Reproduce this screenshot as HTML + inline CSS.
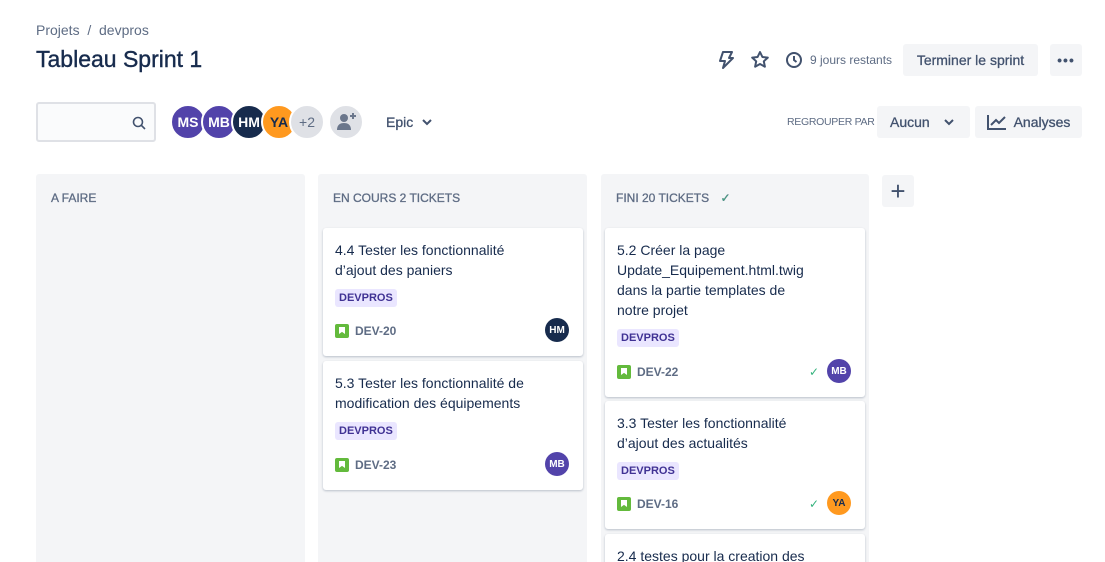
<!DOCTYPE html><html><head><meta charset="utf-8"><style>
*{box-sizing:border-box;margin:0;padding:0}
html,body{width:1105px;height:562px;overflow:hidden}
body{background:#fff;font-family:"Liberation Sans",sans-serif;color:#172b4d;position:relative}
.a{position:absolute}
.crumb{left:36px;top:22px;font-size:14px;color:#5e6c84}
h1{position:absolute;left:36px;top:46px;font-size:23px;font-weight:normal;color:#172b4d;-webkit-text-stroke:0.4px #172b4d}
.btn{position:absolute;background:#f4f5f7;border-radius:3px;font-size:14px;color:#42526e;display:flex;align-items:center;justify-content:center}
.search{left:36px;top:102px;width:120px;height:40px;border:2px solid #dfe1e6;background:#fafbfc;border-radius:3px}
.av{position:absolute;width:32px;height:32px;border-radius:50%;color:#fff;font-size:14px;font-weight:bold;display:flex;align-items:center;justify-content:center;border:2px solid #fff}
.col{position:absolute;top:174px;width:269px;height:388px;background:#f4f5f7;border-radius:3px 3px 0 0;overflow:hidden}
.ch{position:absolute;left:15px;top:17px;font-size:12px;color:#5e6c84;-webkit-text-stroke:0.3px #5e6c84}
.card{position:absolute;left:5px;width:260px;background:#fff;border-radius:3px;box-shadow:0 1px 2px rgba(9,30,66,.25);padding:12px}
.t{font-size:14px;line-height:20px;color:#172b4d;width:200px}
.tag{display:inline-block;background:#eae6ff;color:#403294;font-size:11px;font-weight:bold;padding:3px 4px;border-radius:3px;margin-top:9px}
.ft{position:absolute;left:12px;bottom:18px;display:flex;align-items:center;font-size:12px;font-weight:bold;color:#5e6c84}
.ic{width:14px;height:14px;background:#63ba3c;border-radius:2px;margin-right:6px;position:relative}
.ic:after{content:"";position:absolute;left:4px;top:3px;width:6px;height:7px;background:#fff;clip-path:polygon(0 0,100% 0,100% 100%,50% 70%,0 100%)}
.sa{position:absolute;right:14px;bottom:14px;width:24px;height:24px;border-radius:50%;color:#fff;font-size:10px;font-weight:bold;display:flex;align-items:center;justify-content:center}
.ck{position:absolute;right:46px;bottom:18px;color:#36b37e;font-size:12px}
</style></head><body>
<div class="a crumb">Projets &nbsp;/&nbsp; devpros</div>
<h1>Tableau Sprint 1</h1>
<svg class="a" style="left:717px;top:50px" width="18" height="20" viewBox="0 0 18 20" fill="none" stroke="#42526e" stroke-width="2" stroke-linejoin="round"><path d="M6 2h9l-3 6h4L6 18l2-7H3z"/></svg>
<svg class="a" style="left:750px;top:50px" width="20" height="20" viewBox="0 0 20 20" fill="none" stroke="#42526e" stroke-width="2" stroke-linejoin="round"><path d="M10 2l2.4 5 5.4.6-4 3.7 1.1 5.4L10 14l-4.9 2.7 1.1-5.4-4-3.7 5.4-.6z"/></svg>
<svg class="a" style="left:785px;top:51px" width="18" height="18" viewBox="0 0 18 18" fill="none" stroke="#42526e" stroke-width="2"><circle cx="9" cy="9" r="7"/><path d="M9 5v4l2.5 2"/></svg>
<div class="a" style="left:810px;top:53px;font-size:12px;color:#5e6c84">9 jours restants</div>
<div class="btn" style="left:903px;top:44px;width:135px;height:32px;-webkit-text-stroke:0.3px #42526e">Terminer le sprint</div>
<div class="btn" style="left:1050px;top:44px;width:32px;height:32px;font-weight:bold;font-size:14px;letter-spacing:1px">•••</div>
<div class="a search"><svg class="a" style="left:94px;top:12px" width="14" height="14" viewBox="0 0 14 14" fill="none" stroke="#42526e" stroke-width="1.6"><circle cx="6" cy="6" r="4.5"/><path d="M9.5 9.5L13 13"/></svg></div>
<div class="av" style="left:170px;top:104px;width:36px;height:36px;background:#5243aa">MS</div>
<div class="av" style="left:201px;top:104px;width:36px;height:36px;background:#5243aa">MB</div>
<div class="av" style="left:231px;top:104px;width:36px;height:36px;background:#172b4d">HM</div>
<div class="av" style="left:261px;top:104px;width:36px;height:36px;background:#ff991f;color:#172b4d">YA</div>
<div class="av" style="left:289px;top:104px;width:36px;height:36px;background:#dfe1e6;color:#5e6c84;font-weight:normal">+2</div>
<div class="av" style="left:328px;top:104px;width:36px;height:36px;background:#dfe1e6"><svg width="20" height="20" viewBox="0 0 20 20" fill="#6b778c"><circle cx="8" cy="6" r="4"/><path d="M1 18c0-5 3-7 7-7s7 2 7 7z"/><path d="M14 4h6M17 1v6" stroke="#6b778c" stroke-width="2"/></svg></div>
<div class="a" style="left:386px;top:114px;font-size:14px;color:#42526e;-webkit-text-stroke:0.3px #42526e">Epic</div>
<svg class="a" style="left:422px;top:118px" width="10" height="8" viewBox="0 0 10 8" fill="none" stroke="#42526e" stroke-width="2"><path d="M1 2l4 4 4-4"/></svg>
<div class="a" style="left:787px;top:116px;font-size:10.5px;letter-spacing:-0.3px;color:#5e6c84">REGROUPER PAR</div>
<div class="btn" style="left:877px;top:106px;width:93px;height:32px;justify-content:flex-start;padding-left:13px;-webkit-text-stroke:0.3px #42526e">Aucun<svg style="margin-left:14px" width="10" height="8" viewBox="0 0 10 8" fill="none" stroke="#42526e" stroke-width="2"><path d="M1 2l4 4 4-4"/></svg></div>
<div class="btn" style="left:975px;top:106px;width:107px;height:32px;-webkit-text-stroke:0.3px #42526e"><svg style="margin-right:7px" width="20" height="16" viewBox="0 0 20 16" fill="none" stroke="#42526e" stroke-width="2"><path d="M1 1v14h18M4 11l5-5 3 3 6-6"/></svg>Analyses</div>

<div class="col" style="left:36px"><div class="ch">A FAIRE</div></div>
<div class="col" style="left:318px"><div class="ch">EN COURS 2 TICKETS</div>
 <div class="card" style="top:54px;height:128px"><div class="t">4.4 Tester les fonctionnalité d’ajout des paniers</div><span class="tag">DEVPROS</span><div class="ft"><span class="ic"></span>DEV-20</div><div class="sa" style="background:#172b4d">HM</div></div>
 <div class="card" style="top:187px;height:129px"><div class="t" style="width:220px">5.3 Tester les fonctionnalité de modification des équipements</div><span class="tag">DEVPROS</span><div class="ft"><span class="ic"></span>DEV-23</div><div class="sa" style="background:#5243aa">MB</div></div>
</div>
<div class="col" style="left:601px;width:268px"><div class="ch">FINI 20 TICKETS <span style="color:#36b37e;margin-left:8px">✓</span></div>
 <div class="card" style="top:54px;left:4px;height:169px"><div class="t">5.2 Créer la page Update_Equipement.html.twig dans la partie templates de notre projet</div><span class="tag">DEVPROS</span><div class="ft"><span class="ic"></span>DEV-22</div><span class="ck">✓</span><div class="sa" style="background:#5243aa">MB</div></div>
 <div class="card" style="top:227px;left:4px;height:128px"><div class="t">3.3 Tester les fonctionnalité d’ajout des actualités</div><span class="tag">DEVPROS</span><div class="ft"><span class="ic"></span>DEV-16</div><span class="ck">✓</span><div class="sa" style="background:#ff991f;color:#172b4d">YA</div></div>
 <div class="card" style="top:360px;left:4px;height:60px"><div class="t">2.4 testes pour la creation des</div></div>
</div>
<div class="btn" style="left:882px;top:175px;width:32px;height:32px;font-size:26px;font-weight:300">+</div>
</body></html>
